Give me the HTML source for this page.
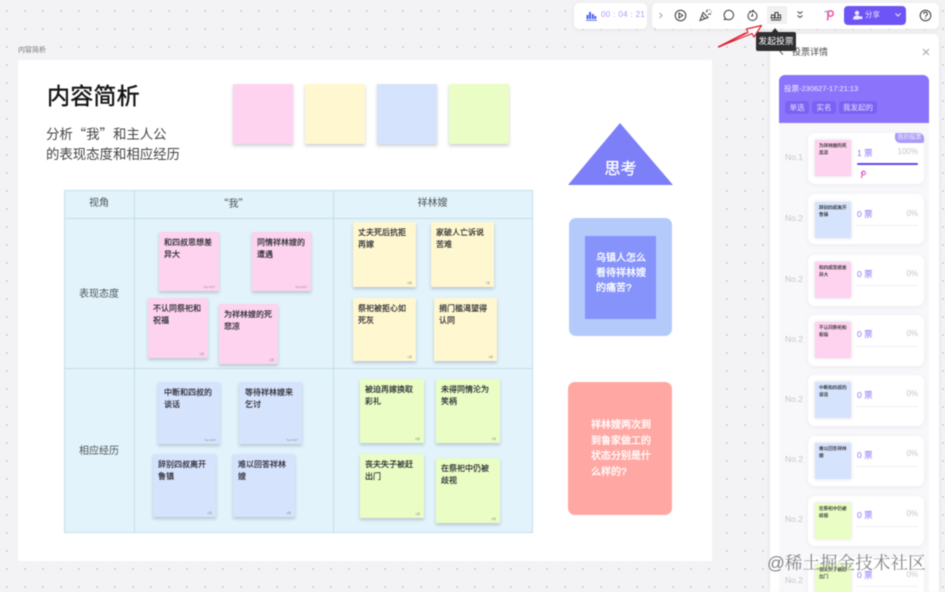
<!DOCTYPE html>
<html lang="zh">
<head>
<meta charset="utf-8">
<style>
html,body{margin:0;padding:0;width:945px;height:592px;overflow:hidden;background:#f3f3f5}
*{box-sizing:border-box}
#w{position:relative;width:945px;height:592px;overflow:hidden;font-family:"Liberation Sans","Noto Sans CJK SC",sans-serif;
background-color:#f3f3f5;background-image:radial-gradient(circle at center,#c8c8cc 0,#c8c8cc .7px,transparent 1.1px);background-size:18px 18px;background-position:-2px 2px;filter:blur(.4px)}
#w div,#w svg{position:absolute}
.cj{font-family:"Noto Sans CJK SC",sans-serif}
.s{box-shadow:0 2px 3px rgba(90,100,120,.3);color:#2b2b33;font-size:8px;line-height:12px;padding:5px 5px 0 5px;-webkit-text-stroke:.2px #2b2b33}
.p{background:#fdd3ef}.y{background:#fff7cf}.b{background:#d6e3fd}.g{background:#e9fdc4}
.s i{position:absolute;right:4px;bottom:2px;font-style:normal;font-size:3px;line-height:4px;color:#888;-webkit-text-stroke:0}
.t{color:#4d5558;text-align:center;line-height:16px}
.c{left:808px;width:116px;background:#fff;border-radius:7px;box-shadow:0 1px 5px rgba(120,120,150,.1);height:51px}
.n{left:785px;width:22px;font-size:8.5px;line-height:12px;color:#c6c6cb}
.h{left:815px;width:36px;height:36px;box-shadow:0 0 3px rgba(90,100,120,.25);color:#222;font-size:4.6px;line-height:6.5px;padding:3px 3px 0 4px;-webkit-text-stroke:.1px #222}
.v{left:857px;font-size:8.5px;line-height:12px;color:#8b74fb;white-space:nowrap}
.q{left:888px;width:30px;text-align:right;font-size:8px;line-height:12px;color:#c6c6cb}
.l{left:857px;width:61px;height:1px;background:#f0f0f3}
.tag{top:101px;height:13px;background:#7b62f4;border-radius:3px;color:#e6e0ff;font-size:7.5px;line-height:13px;text-align:center}
</style>
</head>
<body>
<div id="w">

<div style="left:18px;top:46px;font-size:7px;line-height:10px;color:#77777d">内容简析</div>
<div style="left:18px;top:60px;width:694px;height:501px;background:#fff"></div>

<div style="left:47px;top:80px;font-size:23px;line-height:32px;color:#141414;white-space:nowrap;letter-spacing:.2px;-webkit-text-stroke:.45px #141414">内容简析</div>
<div class="cj" style="left:46px;top:123px;font-size:13.4px;line-height:20px;color:#444;white-space:nowrap">分析“我”和主人公<br>的表现态度和相应经历</div>

<div class="s p" style="left:233px;top:84px;width:60px;height:60px"></div>
<div class="s y" style="left:305px;top:84px;width:60px;height:60px"></div>
<div class="s b" style="left:377px;top:84px;width:60px;height:60px"></div>
<div class="s g" style="left:449px;top:84px;width:60px;height:60px"></div>

<!-- table -->
<div style="left:64px;top:190px;width:469px;height:343px;background:#e2f3fb;border:1px solid #c4dfe6"></div>
<div style="left:64px;top:218px;width:469px;height:1px;background:#c4dfe6"></div>
<div style="left:64px;top:368px;width:469px;height:1px;background:#c4dfe6"></div>
<div style="left:134px;top:190px;width:1px;height:343px;background:#c4dfe6"></div>
<div style="left:333px;top:190px;width:1px;height:343px;background:#c4dfe6"></div>
<div class="t" style="left:64px;top:196px;width:70px;font-size:10px">视角</div>
<div class="t cj" style="left:134px;top:195px;width:199px;font-size:10px">“我”</div>
<div class="t" style="left:333px;top:196px;width:199px;font-size:10px">祥林嫂</div>
<div class="t" style="left:64px;top:287px;width:70px;font-size:10px">表现态度</div>
<div class="t" style="left:64px;top:444px;width:70px;font-size:10px">相应经历</div>

<!-- pink -->
<div class="s p" style="left:159px;top:232px;width:60px;height:59px">和四叔思想差异大<i>Tue 6/27</i></div>
<div class="s p" style="left:252px;top:232px;width:59px;height:59px">同情祥林嫂的遭遇<i>Tue 6/27</i></div>
<div class="s p" style="left:148px;top:298px;width:60px;height:60px">不认同祭祀和祝福<i>1月</i></div>
<div class="s p" style="left:219px;top:304px;width:59px;height:60px">为祥林嫂的死悲凉<i>2月</i></div>
<!-- blue -->
<div class="s b" style="left:158px;top:382px;width:62px;height:62px;padding:5px 6px">中断和四叔的谈话<i>Tue 6/27</i></div>
<div class="s b" style="left:239px;top:382px;width:63px;height:62px;padding:5px 6px">等待祥林嫂来乞讨<i>Tue 6/27</i></div>
<div class="s b" style="left:153px;top:454px;width:63px;height:63px;padding:5px">辞别四叔离开鲁镇<i>1月</i></div>
<div class="s b" style="left:233px;top:454px;width:62px;height:63px;padding:5px">难以回答祥林嫂<i>2月</i></div>
<!-- yellow -->
<div class="s y" style="left:353px;top:222px;width:63px;height:65px;padding:5px">丈夫死后抗拒再嫁<i>6月</i></div>
<div class="s y" style="left:431px;top:222px;width:63px;height:65px;padding:5px">家破人亡诉说苦难<i>7月</i></div>
<div class="s y" style="left:353px;top:298px;width:63px;height:63px;padding:5px">祭祀被拒心如死灰<i>1月</i></div>
<div class="s y" style="left:434px;top:298px;width:63px;height:63px;padding:5px">捐门槛渴望得认同<i>2月</i></div>
<!-- green -->
<div class="s g" style="left:360px;top:379px;width:64px;height:64px;padding:5px">被迫再嫁换取彩礼<i>6月</i></div>
<div class="s g" style="left:436px;top:379px;width:64px;height:64px;padding:5px">未得同情沦为笑柄<i>7月</i></div>
<div class="s g" style="left:360px;top:454px;width:64px;height:64px;padding:5px">丧夫失子被赶出门<i>1月</i></div>
<div class="s g" style="left:436px;top:458px;width:64px;height:65px;padding:5px">在祭祀中仍被歧视<i>2月</i></div>

<!-- right shapes -->
<svg style="left:568px;top:123px" width="105" height="63"><polygon points="52,0 105,62 0,62" fill="#7d7ff8"/></svg>
<div style="left:568px;top:158px;width:105px;text-align:center;color:#fff;font-size:16px;line-height:24px;-webkit-text-stroke:.3px #fff">思考</div>
<div style="left:569px;top:218px;width:103px;height:118px;background:#b4cafb;border-radius:7px"></div>
<div style="left:585px;top:236px;width:71px;height:83px;background:#8593fb"></div>
<div style="left:596px;top:251px;font-size:10px;line-height:15px;color:#fff;white-space:nowrap;-webkit-text-stroke:.3px #fff">乌镇人怎么<br>看待祥林嫂<br>的痛苦?</div>
<div style="left:568px;top:382px;width:104px;height:133px;background:#ffa8a3;border-radius:7px"></div>
<div style="left:591px;top:418px;font-size:10px;line-height:15.5px;color:#fff;white-space:nowrap;-webkit-text-stroke:.3px #fff">祥林嫂两次到<br>到鲁家做工的<br>状态分别是什<br>么样的?</div>

<!-- toolbar -->
<div style="left:574px;top:3px;width:73px;height:26px;background:#fff;border-radius:5px;box-shadow:0 1px 4px rgba(120,120,140,.12)"></div>
<svg style="left:586px;top:10px" width="11" height="11" viewBox="0 0 11 11"><path d="M1.500 5v4M4 2v7M6.800 4v5M9.300 6v3" stroke="#4f5ff0" stroke-width="2" fill="none"/><path d="M0 10.300h11" stroke="#4f5ff0" stroke-width=".9"/></svg>
<div style="left:601px;top:9px;font-size:8px;line-height:12px;color:#a99ef6;white-space:nowrap;letter-spacing:.35px">00 : 04 : 21</div>

<div style="left:652px;top:3px;width:287px;height:26px;background:#fff;border-radius:5px;box-shadow:0 1px 4px rgba(120,120,140,.12)"></div>
<svg style="left:652px;top:3px" width="287" height="26" viewBox="652 3 287 26" fill="none" stroke="#3a3a3d" stroke-width="1">
<path d="M659.500 13l2.500 2.500-2.500 2.500" stroke="#a5a5aa"/>
<circle cx="680.500" cy="15.500" r="5.300"/><path d="M679 13v5l3.800-2.500z"/>
<path d="M700 20.500l3-8 5 5zM702 15l3 4" /><path d="M706 12c1-.5 1.500-1.500 1.200-2.500M708 14.500c1-.8 2-.8 3-.3M709.500 9.500l.6.6M711 12l.6-.3"/>
<path d="M724.500 19.500l.7-1.500a4.700 4.700 0 1 1 1.500 1.200z"/>
<circle cx="752.500" cy="16" r="4.500"/><path d="M752.500 13.500v2.500l-1.500 0M749.500 11l1.500 1M752 10.500h2"/>
<rect x="767" y="6" width="20" height="18" rx="2" fill="#f0f0f1" stroke="none"/>
<path d="M771.500 18v-3h3v3M775 18v-5.500h3V18M778 15h2.500v3M770.500 18h11M771 20h10"/>
<path d="M797.500 11.500l2.500 2 2.500-2M797.500 15.500l2.500 2 2.500-2"/>
<path d="M824.500 12l3.500-1" stroke="#3fa9f5"/>
<path d="M827.500 20.500l1-8" stroke="#f05aa6" stroke-width="1.600"/><circle cx="830.500" cy="13.500" r="2.700" stroke="#f05aa6" stroke-width="1.700"/>
<circle cx="925.500" cy="15.500" r="5.300"/><path d="M923.700 14a1.800 1.800 0 1 1 2.700 1.500c-.6.400-.9.700-.9 1.300M925.500 17.800v.8"/>
</svg>
<div style="left:844px;top:6px;width:62px;height:19px;background:#6d55f5;border-radius:4px"></div>
<svg style="left:853px;top:10px" width="10" height="10" viewBox="0 0 10 10"><circle cx="4" cy="3" r="2.200" fill="#ede9ff"/><path d="M0 9.500c0-3 2-4 4-4s3 .6 3.500 2L6 9.500z" fill="#ede9ff"/><circle cx="8" cy="7.800" r="1.500" fill="#ede9ff"/></svg>
<div style="left:865px;top:9px;font-size:7.500px;line-height:12px;color:#ede9ff">分享</div>
<svg style="left:894px;top:12px" width="8" height="6"><path d="M1.500 1.500L4 4l2.500-2.500" stroke="#ede9ff" fill="none"/></svg>

<!-- panel -->
<div style="left:770px;top:34px;width:169px;height:558px;background:#fff;border-radius:6px 6px 0 0;box-shadow:0 1px 5px rgba(120,120,140,.12)"></div>
<svg style="left:778px;top:47px" width="8" height="10"><path d="M5 1.500L2 4.500l3 3" stroke="#555" fill="none"/></svg>
<div style="left:792px;top:46px;font-size:9px;line-height:12px;color:#4a4a4e">投票详情</div>
<svg style="left:922px;top:48px" width="8" height="8"><path d="M1 1l6 6M7 1L1 7" stroke="#a3a3a8" stroke-width="1"/></svg>
<div style="left:779px;top:123px;width:150px;height:469px;background:#f8f8fb"></div>
<div style="left:779px;top:75px;width:150px;height:48px;background:#8b74fb;border-radius:6px 6px 0 0"></div>
<div style="left:784px;top:83px;font-size:7.500px;line-height:12px;color:#f0ecff;white-space:nowrap">投票-230627-17:21:13</div>
<div class="tag" style="left:785px;width:24px">单选</div>
<div class="tag" style="left:812px;width:24px">实名</div>
<div class="tag" style="left:839px;width:38px">我发起的</div>

<!-- list -->
<div class="c" style="top:133px"></div><div class="n" style="top:151px">No.1</div>
<div class="h p" style="top:140px">为祥林嫂的死悲凉</div>
<div class="v" style="top:147px">1 票</div><div class="q" style="top:146px">100%</div>
<div style="left:857px;top:163px;width:61px;height:2px;background:#6347e8;border-radius:1px"></div>
<div style="left:895px;top:133px;width:29px;height:10px;background:#a99af6;border-radius:2px 5px 2px 5px;color:#f3f0ff;font-size:6px;line-height:10px;text-align:center">我的投票</div>
<svg style="left:858px;top:170px" width="9" height="9"><path d="M3.500 8l1-6" stroke="#e36bc8" stroke-width="1.300"/><circle cx="5.500" cy="3" r="1.900" fill="none" stroke="#e36bc8" stroke-width="1.200"/></svg>

<div class="c" style="top:194px;height:50px"></div><div class="n" style="top:212px">No.2</div>
<div class="h b" style="top:202px">辞别四叔离开鲁镇</div>
<div class="v" style="top:208px">0 票</div><div class="q" style="top:208px">0%</div><div class="l" style="top:225px"></div>

<div class="c" style="top:255px"></div><div class="n" style="top:273px">No.2</div>
<div class="h p" style="top:262px">和四叔思想差异大</div>
<div class="v" style="top:268px">0 票</div><div class="q" style="top:268px">0%</div><div class="l" style="top:285px"></div>

<div class="c" style="top:315px"></div><div class="n" style="top:333px">No.2</div>
<div class="h p" style="top:322px">不认同祭祀和祝福</div>
<div class="v" style="top:328px">0 票</div><div class="q" style="top:328px">0%</div><div class="l" style="top:346px"></div>

<div class="c" style="top:375px"></div><div class="n" style="top:393px">No.2</div>
<div class="h b" style="top:382px">中断和四叔的谈话</div>
<div class="v" style="top:389px">0 票</div><div class="q" style="top:388px">0%</div><div class="l" style="top:406px"></div>

<div class="c" style="top:436px;height:50px"></div><div class="n" style="top:453px">No.2</div>
<div class="h b" style="top:443px">难以回答祥林嫂</div>
<div class="v" style="top:449px">0 票</div><div class="q" style="top:448px">0%</div><div class="l" style="top:466px"></div>

<div class="c" style="top:496px;height:50px"></div><div class="n" style="top:513px">No.2</div>
<div class="h g" style="top:503px">在祭祀中仍被歧视</div>
<div class="v" style="top:509px">0 票</div><div class="q" style="top:508px">0%</div><div class="l" style="top:526px"></div>

<div class="c" style="top:557px"></div><div class="n" style="top:574px">No.2</div>
<div class="h g" style="top:564px;height:28px">丧夫失子被赶出门</div>
<div class="v" style="top:569px">0 票</div><div class="q" style="top:569px">0%</div><div class="l" style="top:586px"></div>

<!-- tooltip + arrow -->
<div style="left:756px;top:32px;width:40px;height:19px;background:#2f2f31;border-radius:2px;color:#fff;font-size:8.800px;line-height:19px;text-align:center;white-space:nowrap">发起投票</div>
<svg style="left:770px;top:28px" width="10" height="5"><path d="M5 0l4 5H1z" fill="#2f2f31"/></svg>
<svg style="left:715px;top:22px" width="50" height="28" viewBox="715 22 50 28"><path d="M718.500 47L748 32.500l-1.500-3.500 15-3.500-7.500 11.500-2-3.500z" fill="#fff" stroke="#dc2030" stroke-width="1.200" stroke-linejoin="round"/><path d="M718.500 47L746 33" stroke="#dc2030" stroke-width="1.600"/></svg>

<!-- watermark -->
<div style="left:767px;top:551px;font-size:17.600px;line-height:24px;color:rgba(105,105,110,.82);white-space:nowrap;font-family:'Liberation Sans','Noto Serif CJK SC',serif;text-shadow:0 0 1px rgba(255,255,255,.7)">@稀土掘金技术社区</div>

</div>
</body>
</html>
